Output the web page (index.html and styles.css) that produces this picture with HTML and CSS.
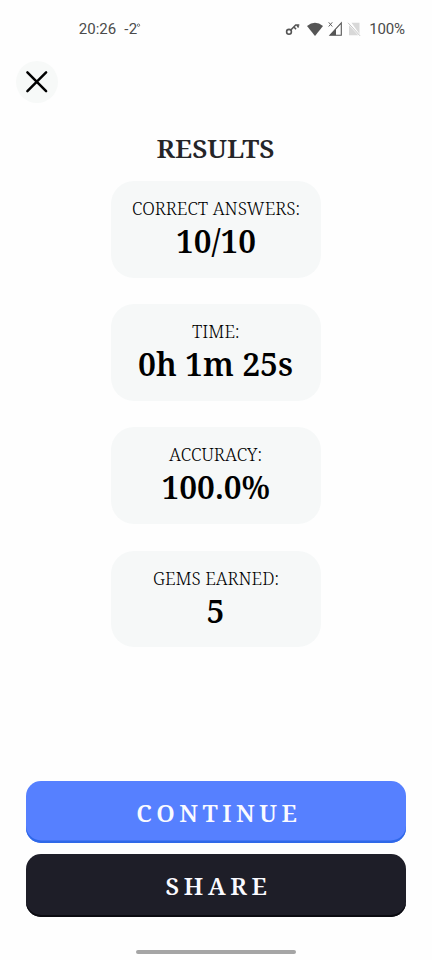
FILE: index.html
```html
<!DOCTYPE html>
<html lang="en">
<head>
<meta charset="utf-8">
<title>Results</title>
<link rel="stylesheet" href="styles.css">
</head>
<body>
<main class="screen">
  <header class="status">
    <svg class="status-line" viewBox="0 0 432 57">
      <text class="clock" x="78.7" y="34" textLength="37.5">20:26</text>
      <text class="clock" x="124.3" y="34" textLength="13">-2</text>
      <circle cx="138.5" cy="25.2" r="1.2" fill="none" stroke="#555" stroke-width=".8"/>
      <g fill="none" stroke="#555" stroke-width="1.6"><circle cx="289" cy="31.8" r="2.4"/><path d="M290.8 30l4.9-5h3.6M294 27l2 2.2M297 25l1.6 2.5"/></g>
      <path d="M307 26q8-6.3 16 0L315 36z" fill="#555"/>
      <path d="M341.3 23v12.2H330z" fill="none" stroke="#555" stroke-width="1.1"/>
      <path d="M336 28.8v6.4h-6.4z" fill="#555"/>
      <path d="M328.7 22.3l3.6 4.2M332.3 22.3l-3.6 4.2" stroke="#555" stroke-width=".9"/>
      <path d="M351.5 22.7h8v11.3zM349 25.2v10h9.2z" fill="#d8d8d8"/>
      <path d="M348 22.8l12 13" stroke="#c4c4c4" stroke-width="1"/>
      <text class="clock" x="369.3" y="34" textLength="35.7">100%</text>
    </svg>
  </header>
  <button class="close" aria-label="Close"><svg viewBox="0 0 42 42"><path d="M11.4 11.4l18.7 18.7M30.1 11.4L11.4 30.1"/></svg></button>
  <svg class="title" viewBox="0 0 210 38"><text x="45.5" y="14.6" textLength="118" lengthAdjust="spacingAndGlyphs">RESULTS</text></svg>
  <section class="cards">
    <svg class="card" viewBox="0 0 210 96.6"><text class="label" x="21" y="33.9" textLength="168" lengthAdjust="spacingAndGlyphs">CORRECT ANSWERS:</text><text class="value" x="65" y="71.9" textLength="80" lengthAdjust="spacingAndGlyphs">10/10</text></svg>
    <svg class="card" viewBox="0 0 210 96.6"><text class="label" x="81" y="33.9" textLength="47.5" lengthAdjust="spacingAndGlyphs">TIME:</text><text class="value" x="27" y="71.9" textLength="155" lengthAdjust="spacingAndGlyphs">0h 1m 25s</text></svg>
    <svg class="card" viewBox="0 0 210 96.6"><text class="label" x="58" y="33.9" textLength="93" lengthAdjust="spacingAndGlyphs">ACCURACY:</text><text class="value" x="50.5" y="72.3" textLength="108.5" lengthAdjust="spacingAndGlyphs">100.0%</text></svg>
    <svg class="card" viewBox="0 0 210 96.6"><text class="label" x="42" y="33.9" textLength="126" lengthAdjust="spacingAndGlyphs">GEMS EARNED:</text><text class="value" x="95.5" y="71.9" textLength="18" lengthAdjust="spacingAndGlyphs">5</text></svg>
  </section>
  <section class="actions">
    <button class="action primary"><svg viewBox="0 0 379.5 62"><text x="110.3" y="40.6" textLength="164.5">CONTINUE</text></svg></button>
    <button class="action dark"><svg viewBox="0 0 379.5 62"><text x="139.5" y="40.9" textLength="105.5">SHARE</text></svg></button>
  </section>
  <div class="home"></div>
</main>
</body>
</html>
```
FILE: styles.css
```css
* { box-sizing: border-box; }
body { margin: 0; background: #fefefe; }
svg { display: block; overflow: visible; }
button { border: 0; padding: 0; display: block; }
.screen { width: 432px; height: 960px; display: flex; flex-direction: column; align-items: center; overflow: hidden; }
.status { height: 61px; flex: none; }
.status-line { width: 432px; height: 57px; }
.clock { font: 15px Roboto, sans-serif; fill: #4b4b4b; }
.close { align-self: flex-start; margin-left: 15.7px; width: 42px; height: 42px; border-radius: 50%; background: #f7f9f8; flex: none; }
.close path { fill: none; stroke: #000; stroke-width: 2.5; stroke-linecap: round; }
.title { width: 210px; height: 38px; margin-top: 40px; flex: none; font: 600 26px "Noto Serif", "Droid Serif", "DejaVu Serif Condensed", "DejaVu Serif", serif; fill: #252528; }
.cards { display: flex; flex-direction: column; gap: 26.6px; margin-top: .1px; }
.card { width: 210px; height: 96.6px; border-radius: 23px; background: #f6f8f8; font-family: "Noto Serif", "Droid Serif", "DejaVu Serif Condensed", "DejaVu Serif", serif; }
.label { font-size: 17.3px; font-weight: 300; fill: #000; }
.value { font-size: 32px; font-weight: 600; fill: #000; }
.actions { display: flex; flex-direction: column; gap: 11px; margin-top: 133.7px; }
.action { width: 379.5px; height: 62.3px; border-radius: 15px; }
.action svg { width: 379.5px; height: 62px; font: 600 24px "Noto Serif", "Droid Serif", "DejaVu Serif Condensed", "DejaVu Serif", serif; letter-spacing: 4px; fill: #fafaff; }
.primary { background: #5680ff; box-shadow: inset 0 -2.5px #2f68e8; }
.dark { background: #1e1e28; box-shadow: inset 0 -2px #0b0b11; }
.home { width: 160px; height: 3.5px; border-radius: 2px; background: #a5a5a5; margin-top: 33.5px; }
```
